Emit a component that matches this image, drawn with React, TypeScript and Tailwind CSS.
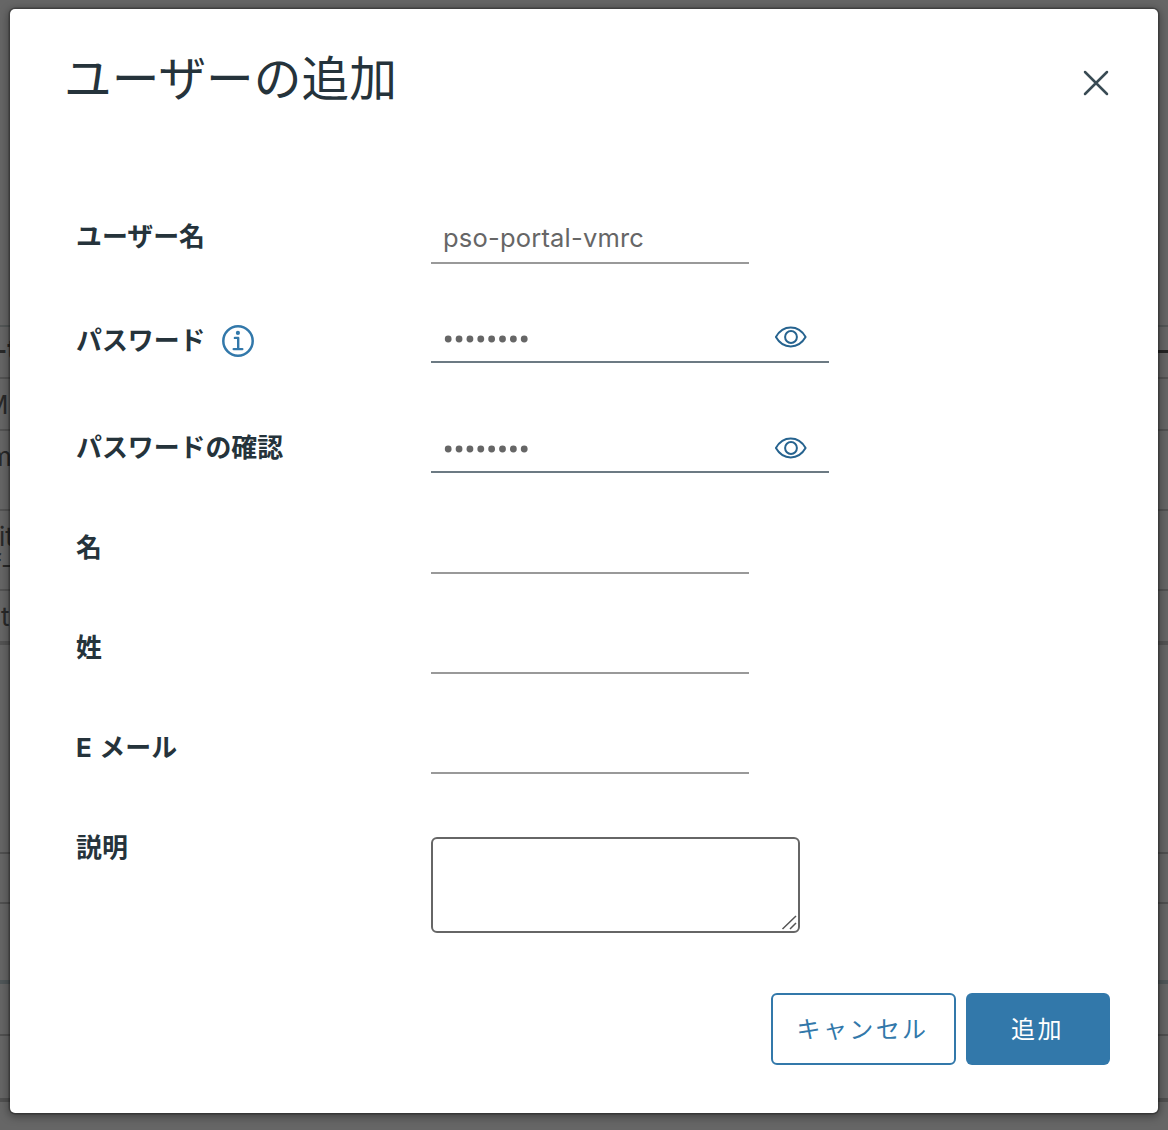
import type { ReactNode } from 'react';

function EyeIcon({ className }: { className: string }) {
  return (
    <svg width="34" height="24" viewBox="0 0 34 24" fill="none" stroke="#26638f" strokeWidth="2" className={`block ${className}`}>
      <path d="M1.900 12C5.500 5.800 11 2.600 16.700 2.600S28 5.800 31.600 12C28 18.200 22.500 21.400 16.700 21.400S5.500 18.200 1.900 12Z" strokeLinejoin="round" />
      <circle cx="17" cy="12" r="5.900" />
    </svg>
  );
}

function InfoIcon() {
  return (
    <svg width="32" height="32" viewBox="0 0 32 32" fill="none" stroke="#3278aa" strokeWidth="2.400" className="ml-[17px] block">
      <circle cx="16" cy="16" r="14.700" strokeWidth="2.500" />
      <circle cx="15.900" cy="7.900" r="2.100" fill="#3278aa" stroke="none" />
      <path d="M12.900 12.900H16.200V24.100M11.700 24.100H20.300" strokeLinecap="round" strokeLinejoin="round" />
    </svg>
  );
}

function Row({ label, className, labelClass, children, extra }: { label: string; className: string; labelClass: string; children: ReactNode; extra?: ReactNode }) {
  return (
    <div className={`flex items-start ${className}`}>
      <div className={`flex w-[355px] shrink-0 items-center ${labelClass}`}>
        <label className="text-[25.900px] leading-8 font-bold whitespace-nowrap">{label}</label>
        {extra}
      </div>
      {children}
    </div>
  );
}

function LineField({ text }: { text?: string }) {
  return (
    <div className="flex h-[48px] w-[318px] items-center border-b-2 border-[#999999] pb-[2px] pl-3 font-['Inter'] text-[25.500px] tracking-[0.200px] text-[#666666]">
      <span className="whitespace-nowrap">{text}</span>
    </div>
  );
}

function PasswordField({ eyeClass }: { eyeClass: string }) {
  return (
    <div className="flex h-[48px] w-[398px] items-center justify-between border-b-2 border-[#6c7a83] pr-[21px] pl-[13px]">
      <svg width="86" height="8" viewBox="0 0 86 8" fill="#666666" className="mt-px block">
        {Array.from({ length: 8 }, (_, i) => (
          <circle key={i} cx={4.2 + i * 10.86} cy="4" r="3.400" />
        ))}
      </svg>
      <EyeIcon className={eyeClass} />
    </div>
  );
}

function Backdrop() {
  return (
    <div className="h-full w-full overflow-hidden bg-[#666666] font-['Inter'] text-[26px] leading-[52px] text-[#292929]">
      <div className="h-[325px]" />
      <div className="flex h-[52px] justify-between border-t-2 border-[#535757] leading-[46px] font-bold">
        <span className="-ml-[5px]">-t</span>
        <span className="mt-[23px] h-[3px] w-7 bg-[#242424]" />
      </div>
      <div className="h-[52px] border-t-2 border-[#535353]"><span className="-ml-[15px]">M</span></div>
      <div className="h-[80px] border-t-2 border-[#535353]"><span className="-ml-[11px]">m</span></div>
      <div className="h-[80px] border-t-2 border-[#535353] pt-[11px] leading-[30px]">
        <div className="-ml-px">it</div>
        <div className="-ml-[8px] -mt-[2px]">f-</div>
      </div>
      <div className="h-[52px] border-t-2 border-[#535353]"><span className="ml-px">t</span></div>
      <div className="h-[211px] border-t-4 border-[#535353]" />
      <div className="h-[50px] border-t-2 border-[#505050]" />
      <div className="h-[78px] border-t-2 border-[#505050]" />
      <div className="h-[54px] border-t-4 border-[#505759]" />
      <div className="h-[64px] border-t-2 border-[#505050]" />
      <div className="h-[32px] border-t-4 border-[#505050]" />
    </div>
  );
}

export default function App() {
  return (
    <main className="relative h-[1130px] w-[1168px] overflow-hidden font-['Inter','Noto_Sans_CJK_JP',sans-serif] text-[#25333b]">
      <Backdrop />
      <section role="dialog" className="absolute top-[9px] left-[10px] flex h-[1104px] w-[1148px] flex-col rounded-[5px] bg-white shadow-[0_0_0_1.500px_rgba(0,0,0,0.25),0_2px_8px_2px_rgba(0,0,0,0.35)]">
        <header className="flex h-[140px] items-start justify-between pt-[35px] pr-[48px] pl-[54px]">
          <h1 className="text-[47.700px] leading-[70px] font-normal whitespace-nowrap">ユーザーの追加</h1>
          <button aria-label="閉じる" className="mt-[25px]">
            <svg width="28" height="28" viewBox="0 0 28 28" fill="none" stroke="#394b54" strokeWidth="2.500" strokeLinecap="round" className="block">
              <path d="M3 3L25 25M25 3L3 25" />
            </svg>
          </button>
        </header>
        <div className="flex flex-1 flex-col pt-[67px] pl-[66px]">
          <Row label="ユーザー名" className="h-[99px]" labelClass="mt-[5px]"><LineField text="pso-portal-vmrc" /></Row>
          <Row label="パスワード" className="h-[110px]" labelClass="mt-[10px]" extra={<InfoIcon />}><PasswordField eyeClass="-mt-[2px]" /></Row>
          <Row label="パスワードの確認" className="h-[101px]" labelClass="mt-[7px]"><PasswordField eyeClass="mt-0" /></Row>
          <Row label="名" className="h-[100px]" labelClass="mt-[6px]"><LineField /></Row>
          <Row label="姓" className="h-[100px]" labelClass="mt-[6px]"><LineField /></Row>
          <Row label="E メール" className="h-[111px]" labelClass="mt-[6px] [word-spacing:1.500px]"><LineField /></Row>
          <Row label="説明" className="h-[96px]" labelClass="-mt-[5px]">
            <div className="flex h-[96px] w-[369px] items-end justify-end rounded-[6px] border-2 border-[#666666]">
              <svg width="18" height="18" viewBox="0 0 18 18" stroke="#555555" strokeWidth="1.500" className="block">
                <path d="M2.500 16L16 3M10 16L16 10" />
              </svg>
            </div>
          </Row>
        </div>
        <footer className="flex h-[120px] shrink-0 items-start justify-end gap-[10px] pr-[48px] text-[24px]">
          <button className="h-[72px] w-[185px] rounded-[6px] border-2 border-[#3278aa] pt-[2px] pr-[2px] tracking-[2.400px] text-[#3278aa]">キャンセル</button>
          <button className="h-[72px] w-[144px] rounded-[6px] bg-[#3278aa] pt-[2px] pr-px tracking-[2.400px] text-white">追加</button>
        </footer>
      </section>
    </main>
  );
}
